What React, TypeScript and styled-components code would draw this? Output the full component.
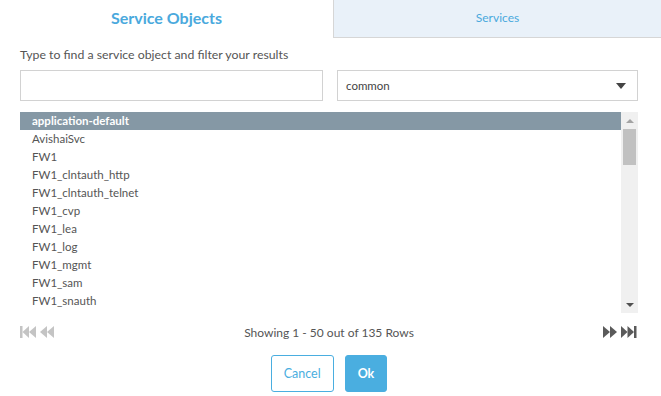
import * as React from 'react';
import styled, { createGlobalStyle } from 'styled-components';

const GlobalStyle = createGlobalStyle`
    html, body {
        margin: 0;
        padding: 0;
        background: #ffffff;
    }
    body {
        font-family: Lato, 'Liberation Sans', sans-serif;
    }
`;

const Dialog = styled.div`
    width: 661px;
    height: 396px;
    display: flex;
    flex-direction: column;
    background: #fff;
`;

const Tabs = styled.div`
    display: flex;
    height: 38px;
`;

const Tab = styled.div<{ active?: boolean }>`
    flex: ${({ active }) => (active ? '0 0 333px' : '1')};
    display: flex;
    align-items: center;
    justify-content: center;
    box-sizing: border-box;
    padding-bottom: 3px;
    color: #4aa9dd;
    font-size: ${({ active }) => (active ? '16px' : '12px')};
    font-weight: ${({ active }) => (active ? 700 : 400)};
    background: ${({ active }) => (active ? '#ffffff' : '#e9f1f9')};
    border-left: ${({ active }) => (active ? 'none' : '1px solid #d6d6d6')};
    border-bottom: ${({ active }) => (active ? 'none' : '1px solid #d6d6d6')};
`;

const Body = styled.div`
    padding: 8px 23px 0 20px;
    display: flex;
    flex-direction: column;
`;

const Hint = styled.div`
    font-size: 12.3px;
    color: #555;
    height: 22px;
    line-height: 18px;
`;

const Filters = styled.div`
    display: flex;
    gap: 14px;
    margin-top: 2px;
`;

const SearchInput = styled.input`
    flex: 0 0 303px;
    height: 31px;
    box-sizing: border-box;
    border: 1px solid #d2d2d2;
    outline: none;
    margin: 0;
    padding: 0 8px;
    font-family: inherit;
`;

const Select = styled.div`
    flex: 1;
    height: 31px;
    box-sizing: border-box;
    border: 1px solid #d2d2d2;
    display: flex;
    align-items: center;
    justify-content: space-between;
    padding: 0 11px 0 8px;
    font-size: 11.5px;
    color: #444;
`;

const Caret = styled.span`
    width: 0;
    height: 0;
    border-left: 5px solid transparent;
    border-right: 5px solid transparent;
    border-top: 6px solid #444;
`;

const ListBox = styled.div`
    display: flex;
    margin-top: 11px;
    height: 201px;
`;

const Rows = styled.div`
    flex: 1;
    overflow: hidden;
`;

const Row = styled.div<{ selected?: boolean }>`
    height: 18px;
    line-height: 18px;
    padding-left: 12px;
    font-size: 11.5px;
    color: ${({ selected }) => (selected ? '#fff' : '#555')};
    font-weight: ${({ selected }) => (selected ? 700 : 400)};
    background: ${({ selected }) => (selected ? '#8598a5' : 'transparent')};
`;

const ScrollTrack = styled.div`
    width: 17px;
    background: #f0f0f0;
    display: flex;
    flex-direction: column;
    align-items: center;
`;

const ScrollArrow = styled.div<{ down?: boolean }>`
    height: 17px;
    display: flex;
    align-items: center;
    justify-content: center;
    &::before {
        content: '';
        border-left: 4px solid transparent;
        border-right: 4px solid transparent;
        ${({ down }) => (down ? 'border-top: 4px solid #505050;' : 'border-bottom: 4px solid #a3a3a3;')}
    }
`;

const ScrollThumb = styled.div`
    width: 13px;
    height: 36px;
    background: #c1c1c1;
`;

const ScrollGap = styled.div`
    flex: 1;
`;

const Pager = styled.div`
    display: flex;
    align-items: center;
    justify-content: space-between;
    height: 38px;
    font-size: 12px;
    color: #555;
`;

const PagerIcons = styled.div<{ dim?: boolean }>`
    display: flex;
    gap: 2px;
    width: 37px;
    color: ${({ dim }) => (dim ? '#c4c4c4' : '#5a5a5a')};
`;

const Actions = styled.div`
    display: flex;
    justify-content: center;
    gap: 11px;
    margin-top: 4px;
`;

const Button = styled.button<{ primary?: boolean }>`
    height: 37px;
    padding: 0 ${({ primary }) => (primary ? '12px' : '12px')};
    border-radius: 3px;
    font-family: inherit;
    font-size: 12.5px;
    font-weight: ${({ primary }) => (primary ? 700 : 400)};
    border: 1px solid #4aaee0;
    background: ${({ primary }) => (primary ? '#4aaee0' : '#ffffff')};
    color: ${({ primary }) => (primary ? '#ffffff' : '#4aaee0')};
`;

const Arrows = ({ dir, bar }: { dir: 'left' | 'right'; bar: boolean }) => (
    <svg width="17" height="12" viewBox="0 0 17 12" fill="currentColor">
        {dir === 'left' ? (
            <g>
                {bar && <rect x="0" y="0" width="2.5" height="12" />}
                <polygon points={bar ? '9,0 2.5,6 9,12' : '8,0 1,6 8,12'} />
                <polygon points={bar ? '16,0 9,6 16,12' : '15,0 8,6 15,12'} />
            </g>
        ) : (
            <g>
                <polygon points={bar ? '1,0 7.5,6 1,12' : '2,0 9,6 2,12'} />
                <polygon points={bar ? '7.5,0 14,6 7.5,12' : '9,0 16,6 9,12'} />
                {bar && <rect x="14" y="0" width="2.5" height="12" />}
            </g>
        )}
    </svg>
);

const items = [
    'application-default',
    'AvishaiSvc',
    'FW1',
    'FW1_clntauth_http',
    'FW1_clntauth_telnet',
    'FW1_cvp',
    'FW1_lea',
    'FW1_log',
    'FW1_mgmt',
    'FW1_sam',
    'FW1_snauth',
];

export default function App() {
    const [query, setQuery] = React.useState('');
    const [selected, setSelected] = React.useState(0);

    return (
        <>
            <GlobalStyle />
            <Dialog>
                <Tabs>
                    <Tab active>Service Objects</Tab>
                    <Tab>Services</Tab>
                </Tabs>
                <Body>
                    <Hint>Type to find a service object and filter your results</Hint>
                    <Filters>
                        <SearchInput value={query} onChange={(e) => setQuery(e.target.value)} />
                        <Select>
                            common
                            <Caret />
                        </Select>
                    </Filters>
                    <ListBox>
                        <Rows>
                            {items
                                .filter((i) => i.toLowerCase().includes(query.toLowerCase()))
                                .map((item, idx) => (
                                    <Row key={item} selected={idx === selected} onClick={() => setSelected(idx)}>
                                        {item}
                                    </Row>
                                ))}
                        </Rows>
                        <ScrollTrack>
                            <ScrollArrow />
                            <ScrollThumb />
                            <ScrollGap />
                            <ScrollArrow down />
                        </ScrollTrack>
                    </ListBox>
                    <Pager>
                        <PagerIcons dim>
                            <Arrows dir="left" bar />
                            <Arrows dir="left" bar={false} />
                        </PagerIcons>
                        <span>Showing 1 - 50 out of 135 Rows</span>
                        <PagerIcons>
                            <Arrows dir="right" bar={false} />
                            <Arrows dir="right" bar />
                        </PagerIcons>
                    </Pager>
                    <Actions>
                        <Button>Cancel</Button>
                        <Button primary>Ok</Button>
                    </Actions>
                </Body>
            </Dialog>
        </>
    );
}
